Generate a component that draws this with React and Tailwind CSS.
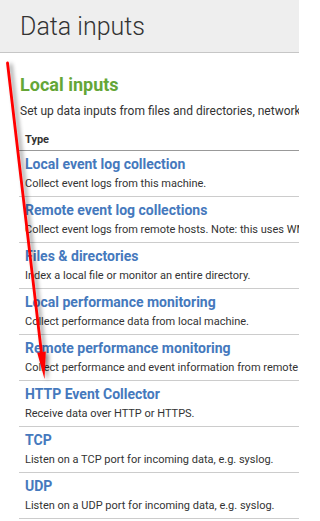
import React from 'react';

const inputs = [
    { title: 'Local event log collection', desc: 'Collect event logs from this machine.' },
    { title: 'Remote event log collections', desc: 'Collect event logs from remote hosts. Note: this uses WMI and requires a domain account.' },
    { title: 'Files & directories', desc: 'Index a local file or monitor an entire directory.' },
    { title: 'Local performance monitoring', desc: 'Collect performance data from local machine.' },
    { title: 'Remote performance monitoring', desc: 'Collect performance and event information from remote hosts.' },
    { title: 'HTTP Event Collector', desc: 'Receive data over HTTP or HTTPS.' },
    { title: 'TCP', desc: 'Listen on a TCP port for incoming data, e.g. syslog.' },
    { title: 'UDP', desc: 'Listen on a UDP port for incoming data, e.g. syslog.' },
];

// flecha roja dibujada encima de la captura
const Arrow = () => (
    <svg className="absolute inset-0 pointer-events-none" width="299" height="521">
        <defs>
            <filter id="sombra" x="-50%" y="-10%" width="300%" height="120%">
                <feDropShadow dx="3" dy="2" stdDeviation="2" floodColor="#000" floodOpacity="0.45" />
            </filter>
        </defs>
        <g filter="url(#sombra)">
            <line x1="7.5" y1="63" x2="41.6" y2="354" stroke="#ff0000" strokeWidth="2.8" strokeLinecap="round" />
            <polygon points="44.5,379 45.8,351.5 37.2,352.7" fill="#ff0000" />
        </g>
    </svg>
);

const App = () => {
    return (
        <div className="relative w-[299px] h-[521px] overflow-hidden bg-white font-['Roboto',sans-serif] text-[#333]">
            <div className="h-[53px] bg-[#eeeeee] border-b border-[#c6c6c6] px-5 flex items-center">
                <h1 className="text-[25px] font-light text-[#333] leading-none whitespace-nowrap">Data inputs</h1>
            </div>

            <div className="pl-5 w-[600px]">
                <h2 className="mt-[21px] text-[18px] font-bold leading-[22px] text-[#65a637]">Local inputs</h2>
                <p className="mt-[7px] text-[12px] leading-[16px] whitespace-nowrap">
                    Set up data inputs from files and directories, network ports, and scripted inputs.
                </p>
            </div>

            <div className="ml-[19px] mt-[13px] w-[600px]">
                <div className="px-[6px] pb-[3px] border-b border-[#999] text-[11px] font-bold leading-[15px]">Type</div>
                {inputs.map((item) => (
                    <div key={item.title} className="px-[6px] pt-[4px] pb-[4px] border-b border-[#cccccc] whitespace-nowrap">
                        <div className="text-[14px] font-bold leading-[18px] text-[#4579bd]">{item.title}</div>
                        <div className="mt-[3px] text-[11px] leading-[16px] text-[#333]">{item.desc}</div>
                    </div>
                ))}
            </div>

            <Arrow />
        </div>
    );
};

export default App;
